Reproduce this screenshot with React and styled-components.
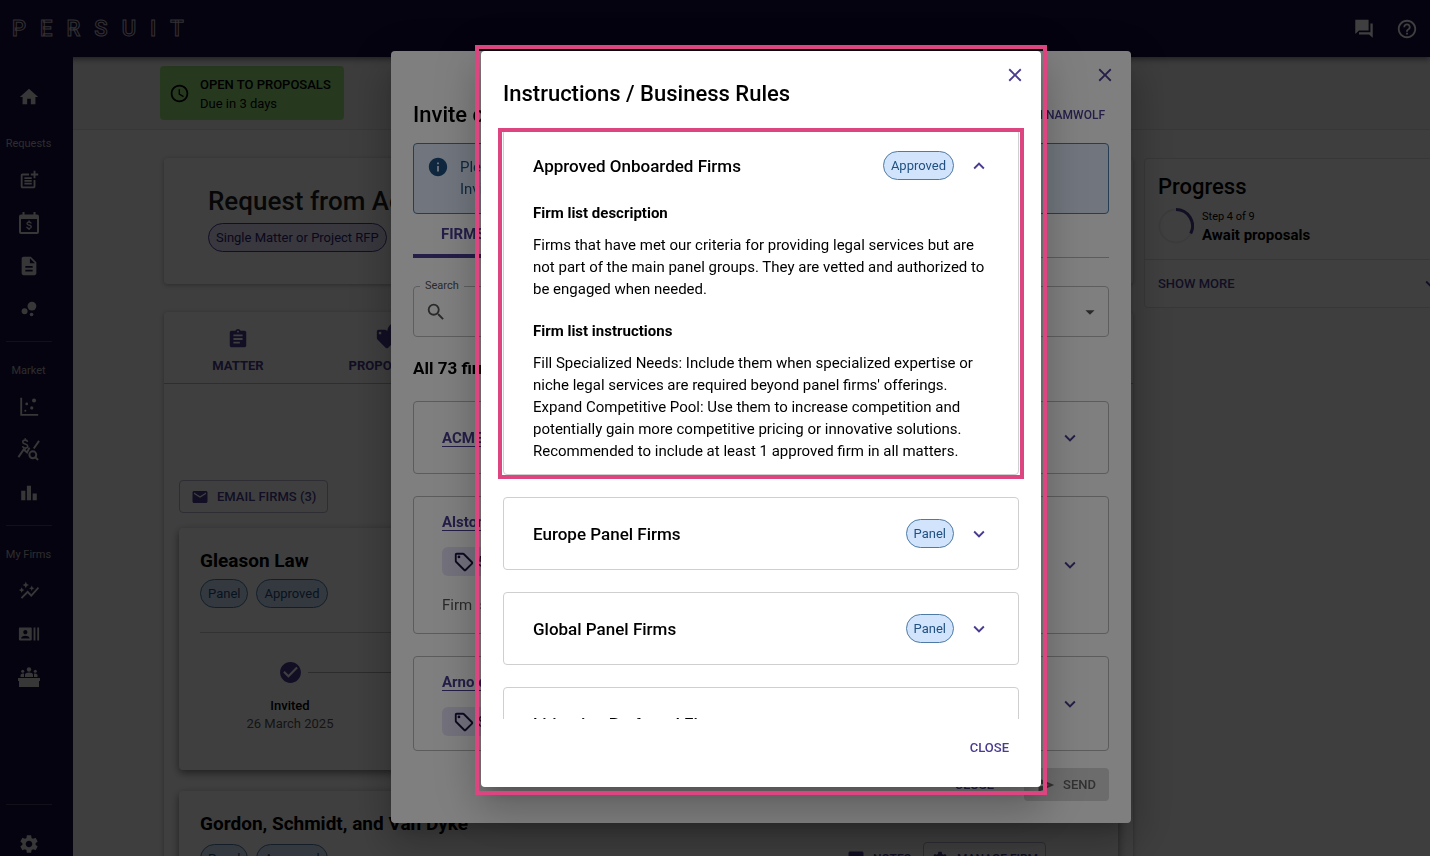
import React from "react";
import styled, { createGlobalStyle, css } from "styled-components";
import {
  MdArrowDropDown,
  MdAssignment,
  MdAutoGraph,
  MdBubbleChart,
  MdCheckCircle,
  MdClose,
  MdDescription,
  MdEmail,
  MdExpandLess,
  MdExpandMore,
  MdHelpOutline,
  MdHome,
  MdInfo,
  MdLocalOffer,
  MdOutlineAccessTime,
  MdOutlineLocalOffer,
  MdPostAdd,
  MdRecentActors,
  MdSearch,
  MdSend,
  MdSettings,
  MdSms,
} from "react-icons/md";

const colors = {
  navy: "#180c40",
  primary: "#483c90",
  primaryDark: "#2c1f72",
  info: "#1f5080",
  infoBg: "#d2e4fc",
  infoBorder: "#4d7ba6",
  pink: "#dc457f",
  border: "#cfcfcf",
};

const GlobalStyle = createGlobalStyle`
  *, *::before, *::after {
    box-sizing: border-box;
  }

  body {
    margin: 0;
    overflow: hidden;
    background: #f8f8f8;
    color: #000;
    font-family: Roboto, "Liberation Sans", sans-serif;
    font-size: 15px;
    line-height: 22px;
  }

  button, input, select {
    font: inherit;
    color: inherit;
  }

  h1, h2, h3, h4, p, ul {
    margin: 0;
    padding: 0;
  }
`;

/* ---------- shared ---------- */

const IconButton = styled.button`
  display: inline-flex;
  align-items: center;
  justify-content: center;
  flex: none;
  padding: 0;
  border: 0;
  background: none;
  color: ${({ $color }) => $color || colors.primary};
  font-size: 22px;
  cursor: pointer;
`;

const Button = styled.button`
  display: inline-flex;
  align-items: center;
  gap: 8px;
  height: 33px;
  padding: 0 ${({ $pad }) => $pad || 10}px;
  border: ${({ $outlined }) => ($outlined ? "1px solid #b8b4d0" : "0")};
  border-radius: 4px;
  background: ${({ $filled }) => ($filled ? "#d8d8da" : "none")};
  color: ${({ $filled }) => ($filled ? "#636363" : colors.primary)};
  font-size: ${({ $small }) => ($small ? 12 : 13)}px;
  font-weight: 500;
  white-space: nowrap;
  cursor: pointer;

  svg {
    font-size: 18px;
  }
`;

const Chip = styled.span`
  display: inline-flex;
  align-items: center;
  height: 29px;
  padding: 0 7px;
  border: 1px solid ${({ $purple }) => ($purple ? colors.primary : colors.infoBorder)};
  border-radius: 15px;
  background: ${({ $purple }) => ($purple ? "#e4e0f8" : colors.infoBg)};
  color: ${({ $purple }) => ($purple ? colors.primaryDark : colors.info)};
  font-size: 13px;
  white-space: nowrap;
`;

const Row = styled.div`
  display: flex;
  align-items: center;
  gap: ${({ $gap }) => $gap || 8}px;
`;

/* ---------- top bar and side nav ---------- */

const TopBar = styled.header`
  position: relative;
  z-index: 1;
  display: flex;
  align-items: center;
  justify-content: space-between;
  height: 57px;
  padding: 0 12px;
  background: ${colors.navy};
  color: #fff;
  box-shadow: 0 2px 6px rgba(0, 0, 0, 0.5);
`;

const Logo = styled.div`
  display: flex;
  gap: 14px;
  color: transparent;
  font-size: 22px;
  font-weight: 500;
  -webkit-text-stroke: 1px rgba(255, 255, 255, 0.75);
`;

const Shell = styled.div`
  display: flex;
  height: calc(100vh - 57px);
`;

const SideNav = styled.nav`
  position: relative;
  z-index: 2;
  display: flex;
  flex-direction: column;
  align-items: center;
  flex: none;
  width: 73px;
  padding: 18px 16px 1px 0;
  background: ${colors.navy};
  color: #dcdcdc;
`;

const NavLink = styled.a`
  display: flex;
  align-items: center;
  justify-content: center;
  flex: none;
  width: 100%;
  height: ${({ $last }) => ($last ? 22 : 43)}px;
  color: inherit;
  font-size: 22px;
`;

const NavLabel = styled.span`
  margin: ${({ $first }) => ($first ? 18 : 0)}px 0 6px;
  font-size: 11px;
  line-height: 16px;
  color: #b4b4b4;
  white-space: nowrap;
`;

const NavRule = styled.hr`
  width: 46px;
  height: 1px;
  margin: ${({ $bottom }) => ($bottom ? "auto 0 28px" : "11px 0 21px")};
  border: 0;
  background: #4a4166;
  flex: none;
`;

/* ---------- request page ---------- */

const Page = styled.main`
  flex: 1;
  min-width: 0;
  overflow: hidden;
`;

const StatusBar = styled.div`
  height: 73px;
  padding: 9px 87px;
  border-bottom: 1px solid #dedede;
  background: #f2f2f2;
`;

const StatusPill = styled.div`
  display: inline-flex;
  align-items: center;
  gap: 10px;
  height: 54px;
  padding: 0 13px 0 9px;
  border-radius: 4px;
  background: #98e47e;
  font-size: 13px;
  line-height: 19px;

  strong {
    display: block;
    font-weight: 500;
  }

  div {
    padding-top: 2px;
  }

  svg {
    font-size: 21px;
  }
`;

/* the right-hand column runs on past the window edge */
const Columns = styled.div`
  display: grid;
  grid-template-columns: minmax(0, 1fr) 308px;
  gap: 11px;
  align-items: start;
  margin-right: -22px;
  padding: 28px 0 0 91px;
`;

const Paper = styled.section`
  border-radius: 4px;
  background: #fff;
  box-shadow: 0 1px 4px rgba(0, 0, 0, 0.3);
`;

const RequestCard = styled(Paper)`
  height: 126px;
  margin-bottom: 28px;
  padding: 28px 44px;

  h1 {
    margin-bottom: 7px;
    font-size: 26px;
    font-weight: 500;
    line-height: 30px;
    color: #1c1c1c;
  }
`;

const TabPanel = styled(Paper)`
  padding-bottom: 22px;
`;

const Tabs = styled.div`
  display: flex;
  height: 72px;
  border-bottom: 1px solid #b8b8b8;
`;

const Tab = styled.button`
  position: relative;
  display: flex;
  flex-direction: column;
  align-items: center;
  gap: 5px;
  width: 148px;
  padding: 16px 0 0;
  border: 0;
  background: none;
  color: ${colors.primary};
  font-size: 13px;
  font-weight: 700;
  cursor: pointer;

  svg {
    font-size: 22px;
  }
`;

const TabBadge = styled.span`
  position: absolute;
  top: 10px;
  left: 75px;
  width: 20px;
  height: 20px;
  border-radius: 50%;
  background: ${colors.primary};
`;

const FirmArea = styled.div`
  display: flex;
  flex-direction: column;
  align-items: flex-start;
  padding: 96px 15px 0;
`;

const FirmCard = styled(Paper)`
  width: 100%;
  height: 242px;
  margin-top: ${({ $first }) => ($first ? 15 : 21)}px;
  padding: 21px 21px;
  box-shadow: 0 3px 8px rgba(0, 0, 0, 0.5);

  h2 {
    margin-bottom: 7px;
    font-size: 19px;
    font-weight: 700;
    line-height: 23px;
  }
`;

const FirmActions = styled.div`
  display: flex;
  gap: 2px;
  margin-left: auto;
  margin-right: 51px;
`;

const Steps = styled.div`
  display: flex;
  margin-top: 24px;
  padding-top: 27px;
  border-top: 1px solid #c8c8c8;
`;

const Step = styled.div`
  position: relative;
  width: 180px;
  text-align: center;
  font-size: 13px;
  line-height: 18px;
  color: #555;

  svg {
    display: block;
    margin: 0 auto 12px;
    color: ${colors.primary};
    font-size: 25px;
  }

  strong {
    display: block;
    font-weight: 500;
    color: #000;
  }

  &::after {
    content: "";
    position: absolute;
    top: 12px;
    left: 108px;
    width: 144px;
    height: 1px;
    background: #b0b0b0;
  }
`;

const ProgressCard = styled.section`
  border: 1px solid #dedede;
  border-radius: 4px;
  background: #fff;
  overflow: hidden;

  h2 {
    margin-bottom: 8px;
    font-size: 22px;
    font-weight: 500;
    line-height: 26px;
  }
`;

const ProgressTop = styled.div`
  height: 101px;
  padding: 15px 13px;
  border-bottom: 1px solid #dedede;
`;

const StepText = styled.div`
  font-size: 11px;
  line-height: 18px;

  strong {
    display: block;
    font-size: 15px;
    font-weight: 700;
  }
`;

const ShowMore = styled.button`
  display: flex;
  align-items: center;
  justify-content: space-between;
  width: 100%;
  height: 47px;
  padding: 0 9px 0 13px;
  border: 0;
  background: none;
  color: ${colors.primary};
  font-size: 13px;
  font-weight: 500;

  svg {
    font-size: 22px;
  }
`;

/* ---------- dialogs ---------- */

const Backdrop = styled.div`
  position: fixed;
  inset: 0;
  z-index: ${({ $level }) => 10 + $level};
  display: flex;
  align-items: flex-start;
  justify-content: center;
  padding: 51px 0 0 92px;
  background: rgba(0, 0, 0, 0.5);
`;

const Dialog = styled.div`
  position: relative;
  width: ${({ $wide }) => ($wide ? 740 : 560)}px;
  max-width: 100%;
  padding: ${({ $wide }) => ($wide ? "50px 22px 22px" : "29px 22px 23px")};
  border-radius: 4px;
  background: #fff;
  box-shadow: 0 11px 15px -7px rgba(0, 0, 0, 0.2),
    0 24px 38px 3px rgba(0, 0, 0, 0.14), 0 9px 46px 8px rgba(0, 0, 0, 0.12);

  > h2 {
    font-size: 22px;
    font-weight: 500;
    line-height: 27px;
  }
`;

const frame = css`
  &::after {
    content: "";
    position: absolute;
    border: 4px solid ${colors.pink};
    pointer-events: none;
  }
`;

const RulesDialog = styled(Dialog)`
  ${frame}

  &::after {
    inset: -6px -6px -8px;
  }
`;

const CloseX = styled(IconButton)`
  position: absolute;
  top: 13px;
  right: 15px;
`;

const DialogHeading = styled.div`
  display: flex;
  align-items: center;
  justify-content: space-between;
  height: 28px;
  margin-bottom: 14px;

  h2 {
    font-size: 22px;
    font-weight: 500;
  }
`;

const DialogActions = styled.div`
  display: flex;
  justify-content: flex-end;
  gap: ${({ $gap }) => $gap || 0}px;
  margin-top: ${({ $top }) => $top}px;
`;

const Alert = styled.div`
  display: flex;
  gap: 11px;
  height: 71px;
  padding: 12px 13px;
  border: 1px solid ${colors.infoBorder};
  border-radius: 4px;
  background: #e2edfc;
  color: ${colors.info};

  svg {
    flex: none;
    font-size: 22px;
  }
`;

const DialogTabs = styled.div`
  height: 44px;
  margin-bottom: 28px;
  border-bottom: 1px solid #b8b8b8;

  button {
    height: 44px;
    padding: 0 28px;
    border: 0;
    border-bottom: 4px solid ${colors.primary};
    background: none;
    color: ${colors.primary};
    font-weight: 700;
  }
`;

const Fields = styled.div`
  display: grid;
  grid-template-columns: 1fr 1fr;
  gap: 14px;
`;

const Field = styled.div`
  position: relative;
  display: flex;
  align-items: center;
  gap: 8px;
  height: 51px;
  padding: 0 7px 0 11px;
  border: 1px solid #bdbdbd;
  border-radius: 4px;
  color: #555;
  font-size: 22px;

  label {
    position: absolute;
    top: -9px;
    left: 6px;
    padding: 0 5px;
    background: #fff;
    font-size: 11px;
    line-height: 16px;
  }

  input,
  select {
    flex: 1;
    min-width: 0;
    height: 100%;
    border: 0;
    outline: 0;
    background: none;
    appearance: none;
    font-size: 15px;
  }

  > svg {
    flex: none;
  }
`;

const FirmCount = styled.h3`
  margin: 20px 0 22px;
  font-size: 17px;
  font-weight: 700;
  line-height: 22px;
`;

const FirmList = styled.div`
  display: flex;
  flex-direction: column;
  gap: 22px;
`;

const FirmRow = styled.div`
  display: flex;
  align-items: center;
  justify-content: space-between;
  padding: 14px 27px 14px 28px;
  min-height: 73px;
  border: 1px solid #b8b8b8;
  border-radius: 4px;

  a {
    color: ${colors.primary};
    font-weight: 700;
    text-underline-offset: 3px;
  }

  p {
    margin: 18px 0 3px;
    color: #555;
  }
`;

const RateTag = styled.div`
  display: flex;
  align-items: center;
  width: 120px;
  height: 29px;
  margin-top: 14px;
  padding: 0 11px;
  border-radius: 6px;
  background: #e6e2f8;
  color: #1c1040;
  font-size: 14px;

  svg {
    margin-right: 3px;
    font-size: 22px;
  }
`;

const RuleList = styled.div`
  display: flex;
  flex-direction: column;
  gap: 22px;
  max-height: calc(100vh - 244px);
  margin: 0 -8px;
  padding: 22px 8px 0;
  overflow: hidden;
`;

const RuleCard = styled.section`
  position: relative;
  flex: none;
  padding: 0 28px 0 29px;
  border: 1px solid ${colors.border};
  border-radius: 4px;

  ${({ $framed }) =>
    $framed &&
    css`
      ${frame}

      &::after {
        inset: -2px -6px -5px;
      }
    `}
`;

const RuleHeader = styled.div`
  display: flex;
  align-items: center;
  height: 71px;

  h3 {
    flex: 1;
    font-size: 17px;
    font-weight: 500;
  }

  ${IconButton} {
    margin-left: 14px;
  }
`;

const RuleBody = styled.div`
  padding: 1px 0 12px;

  h4 {
    margin-bottom: 10px;
    font-size: 15px;
    font-weight: 700;
    line-height: 22px;
  }

  p + h4 {
    margin-top: 20px;
  }
`;

/* ---------- icons missing from the icon set ---------- */

const Svg = ({ children, ...rest }) => (
  <svg viewBox="0 0 24 24" width="1em" height="1em" fill="currentColor" {...rest}>
    {children}
  </svg>
);

const CalendarMoneyIcon = () => (
  <Svg width="24" height="24">
    <path d="M20 3.500h-1.500V1h-2v2.500h-9V1h-2v2.500H4A2 2 0 0 0 2 5.500V21a2 2 0 0 0 2 2h16a2 2 0 0 0 2-2V5.500a2 2 0 0 0-2-2zM20 21H4V8h16v13z" />
    <path d="M11.400 9.500h1.300v1.100c1.200.2 2 .9 2.100 2h-1.400c-.1-.6-.6-.9-1.400-.9s-1.300.3-1.300.8c0 .6.500.8 1.500 1 1.700.4 2.700 1 2.700 2.300 0 1.100-.9 1.900-2.200 2.100V19h-1.300v-1.100c-1.400-.2-2.200-1-2.300-2.200h1.400c.1.700.6 1.100 1.600 1.100.9 0 1.400-.4 1.400-.9 0-.6-.4-.9-1.600-1.200-1.600-.4-2.500-.9-2.500-2.100 0-1 .8-1.800 2-2z" />
  </Svg>
);

const ScatterIcon = () => (
  <Svg>
    <path d="M2.500 2h2v17.500H22v2H2.500z" />
    <circle cx="17.500" cy="4.800" r="2.200" />
    <circle cx="9.500" cy="8.700" r="1.500" />
    <circle cx="15" cy="13" r="1.700" />
    <circle cx="8" cy="16" r="1.100" />
  </Svg>
);

const PriceSearchIcon = () => (
  <Svg fill="none" stroke="currentColor" strokeWidth="2" width="23" height="23">
    <path d="M1.500 20 7 12l3.500 3L13 10M17.500 11 23 3" />
    <circle cx="16.500" cy="17.500" r="3.600" />
    <path d="m19 20 3 3" />
    <path
      d="M11 4C10.800 2.700 9.800 2.200 8.500 2.200S6 2.800 6 4.200c0 2.800 5.200 1.400 5.200 4.300 0 1.400-1.200 2-2.700 2S6 9.800 5.700 8.500M8.600.3v2M8.600 10.300v2"
      strokeWidth="1.600"
    />
  </Svg>
);

const BarsIcon = () => (
  <Svg>
    <path d="M3.500 9.500h4.500V20H3.500zM9.700 4h4.500v16H9.700zM16 12.500h4.500V20H16z" />
  </Svg>
);

const PanelDeskIcon = () => (
  <Svg width="24" height="24">
    <path d="M1 13h22v3h-1v6H2v-6H1z" />
    <circle cx="12" cy="4.500" r="2.200" />
    <circle cx="5.700" cy="6.300" r="1.500" />
    <circle cx="18.300" cy="6.300" r="1.500" />
    <path d="M8 12V9.700C8 8.500 10 7.600 12 7.600s4 .9 4 2.100V12zM3.500 12v-1.800c0-1 1.500-1.700 3.500-1.600V12zM20.500 12v-1.800c0-1-1.500-1.700-3.500-1.600V12z" />
  </Svg>
);

const ForumIcon = () => (
  <Svg>
    <path d="M2.500 2h14.500v11.500H6.500l-4 4z" />
    <path d="M19 6h2.500v15.500L17.500 18H6.500v-2.500H19z" />
  </Svg>
);

const ProgressRing = () => (
  <svg width="36" height="36" viewBox="0 0 36 36" fill="none">
    <circle cx="18" cy="18" r="16.500" stroke="#ececec" strokeWidth="2" />
    <path d="M18 1.500a16.500 16.500 0 0 1 14.700 24" stroke={colors.primary} strokeWidth="3" />
  </svg>
);

/* ---------- data ---------- */

const navGroups = [
  {
    label: "Requests",
    items: [
      ["New request", MdPostAdd],
      ["Budgets", CalendarMoneyIcon],
      ["Documents", MdDescription],
      ["Insights", MdBubbleChart],
    ],
  },
  {
    label: "Market",
    items: [
      ["Benchmarks", ScatterIcon],
      ["Rates", PriceSearchIcon],
      ["Reports", BarsIcon],
    ],
  },
  {
    label: "My Firms",
    items: [
      ["Performance", MdAutoGraph],
      ["Contacts", MdRecentActors],
      ["Panels", PanelDeskIcon],
    ],
  },
];

const firms = [
  { name: "ACME Legal" },
  { name: "Alston & Bird", tag: "5 rates", note: "Firm is on your panel" },
  { name: "Arnold & Porter", tag: "$ rates" },
];

const rules = [
  {
    title: "Approved Onboarded Firms",
    status: "Approved",
    description:
      "Firms that have met our criteria for providing legal services but are not part of the main panel groups. They are vetted and authorized to be engaged when needed.",
    instructions: [
      "Fill Specialized Needs: Include them when specialized expertise or niche legal services are required beyond panel firms' offerings.",
      "Expand Competitive Pool: Use them to increase competition and potentially gain more competitive pricing or innovative solutions.",
      "Recommended to include at least 1 approved firm in all matters.",
    ],
  },
  { title: "Europe Panel Firms", status: "Panel" },
  { title: "Global Panel Firms", status: "Panel" },
  { title: "Litigation Preferred Firms" },
];

/* ---------- views ---------- */

const Navigation = () => (
  <SideNav>
    <NavLink href="#home" aria-label="Home">
      <MdHome />
    </NavLink>
    {navGroups.map(({ label, items }, idx) => (
      <React.Fragment key={label}>
        {idx > 0 && <NavRule />}
        <NavLabel $first={idx === 0}>{label}</NavLabel>
        {items.map(([name, Icon]) => (
          <NavLink key={name} href={`#${name}`} aria-label={name}>
            <Icon />
          </NavLink>
        ))}
      </React.Fragment>
    ))}
    <NavRule $bottom />
    <NavLink $last href="#settings" aria-label="Settings">
      <MdSettings />
    </NavLink>
  </SideNav>
);

const RequestPage = () => (
  <Page>
    <StatusBar>
      <StatusPill>
        <MdOutlineAccessTime />
        <div>
          <strong>OPEN TO PROPOSALS</strong>
          Due in 3 days
        </div>
      </StatusPill>
    </StatusBar>
    <Columns>
      <div>
        <RequestCard>
          <h1>Request from Acme</h1>
          <Chip $purple>Single Matter or Project RFP</Chip>
        </RequestCard>
        <TabPanel>
          <Tabs>
            <Tab>
              <MdAssignment />
              MATTER
            </Tab>
            <Tab>
              <MdLocalOffer />
              <TabBadge />
              PROPOSALS
            </Tab>
          </Tabs>
          <FirmArea>
            <Button $outlined $pad={11}>
              <MdEmail />
              EMAIL FIRMS (3)
            </Button>
            <FirmCard $first>
              <h2>Gleason Law</h2>
              <Row>
                <Chip>Panel</Chip>
                <Chip>Approved</Chip>
              </Row>
              <Steps>
                <Step>
                  <MdCheckCircle />
                  <strong>Invited</strong>
                  26 March 2025
                </Step>
              </Steps>
            </FirmCard>
            <FirmCard>
              <h2>Gordon, Schmidt, and Van Dyke</h2>
              <Row>
                <Chip>Panel</Chip>
                <Chip>Approved</Chip>
                <FirmActions>
                  <Button $small>
                    <MdSms />
                    NOTES
                  </Button>
                  <Button $small $outlined $pad={7}>
                    <MdSettings />
                    MANAGE FIRM
                  </Button>
                </FirmActions>
              </Row>
            </FirmCard>
          </FirmArea>
        </TabPanel>
      </div>
      <ProgressCard>
        <ProgressTop>
          <h2>Progress</h2>
          <Row>
            <ProgressRing />
            <StepText>
              Step 4 of 9<strong>Await proposals</strong>
            </StepText>
          </Row>
        </ProgressTop>
        <ShowMore>
          SHOW MORE
          <MdExpandMore />
        </ShowMore>
      </ProgressCard>
    </Columns>
  </Page>
);

const InviteDialog = () => (
  <Backdrop $level={0}>
    <Dialog $wide role="dialog" aria-label="Invite counsel">
      <CloseX aria-label="Close">
        <MdClose />
      </CloseX>
      <DialogHeading>
        <h2>Invite counsel</h2>
        <Button $small $pad={4}>
          SEARCH NAMWOLF
        </Button>
      </DialogHeading>
      <Alert>
        <MdInfo />
        <div>
          <p>Please select the firms for this request.</p>
          <p>Invited firms are notified by email.</p>
        </div>
      </Alert>
      <DialogTabs>
        <button>FIRMS</button>
      </DialogTabs>
      <Fields>
        <Field>
          <label htmlFor="firm-search">Search</label>
          <MdSearch />
          <input id="firm-search" type="text" />
        </Field>
        <Field>
          <select aria-label="Firm list" defaultValue="">
            <option value="" />
          </select>
          <MdArrowDropDown />
        </Field>
      </Fields>
      <FirmCount>All 73 firms</FirmCount>
      <FirmList>
        {firms.map(({ name, tag, note }) => (
          <FirmRow key={name}>
            <div>
              <a href="#firm">{name}</a>
              {tag && (
                <RateTag>
                  <MdOutlineLocalOffer />
                  {tag}
                </RateTag>
              )}
              {note && <p>{note}</p>}
            </div>
            <IconButton aria-label={`Expand ${name}`}>
              <MdExpandMore />
            </IconButton>
          </FirmRow>
        ))}
      </FirmList>
      <DialogActions $top={17} $gap={20}>
        <Button>CLOSE</Button>
        <Button $filled $pad={13}>
          <MdSend />
          SEND
        </Button>
      </DialogActions>
    </Dialog>
  </Backdrop>
);

const Rule = ({ title, status, description, instructions }) => {
  const open = Boolean(description);

  return (
    <RuleCard $framed={open}>
      <RuleHeader>
        <h3>{title}</h3>
        {status && <Chip>{status}</Chip>}
        <IconButton aria-label={`Toggle ${title}`} aria-expanded={open}>
          {open ? <MdExpandLess /> : <MdExpandMore />}
        </IconButton>
      </RuleHeader>
      {open && (
        <RuleBody>
          <h4>Firm list description</h4>
          <p>{description}</p>
          <h4>Firm list instructions</h4>
          {instructions.map((line) => (
            <p key={line}>{line}</p>
          ))}
        </RuleBody>
      )}
    </RuleCard>
  );
};

const BusinessRulesDialog = () => (
  <Backdrop $level={1}>
    <RulesDialog role="dialog" aria-label="Instructions / Business Rules">
      <CloseX aria-label="Close">
        <MdClose />
      </CloseX>
      <h2>Instructions / Business Rules</h2>
      <RuleList>
        {rules.map((rule) => (
          <Rule key={rule.title} {...rule} />
        ))}
      </RuleList>
      <DialogActions $top={12}>
        <Button>CLOSE</Button>
      </DialogActions>
    </RulesDialog>
  </Backdrop>
);

const App = () => (
  <>
    <GlobalStyle />
    <TopBar>
      <Logo>
        {"PERSUIT".split("").map((letter) => (
          <span key={letter}>{letter}</span>
        ))}
      </Logo>
      <Row $gap={21}>
        <IconButton aria-label="Messages" $color="#fff">
          <ForumIcon />
        </IconButton>
        <IconButton aria-label="Help" $color="#fff">
          <MdHelpOutline />
        </IconButton>
      </Row>
    </TopBar>
    <Shell>
      <Navigation />
      <RequestPage />
    </Shell>
    <InviteDialog />
    <BusinessRulesDialog />
  </>
);

export default App;
